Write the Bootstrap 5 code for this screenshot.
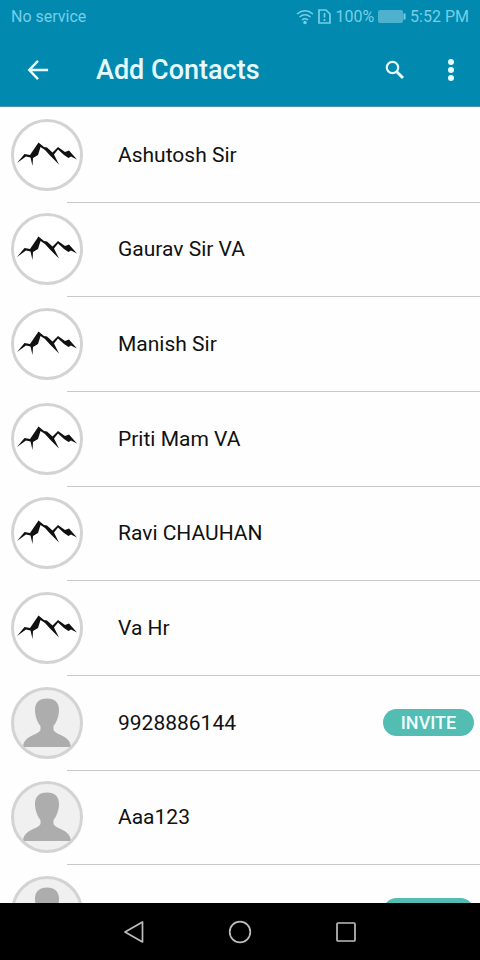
<!DOCTYPE html>
<html lang="en">
<head>
<meta charset="utf-8">
<meta name="viewport" content="width=device-width, initial-scale=1">
<title>Add Contacts</title>
<link href="https://cdn.jsdelivr.net/npm/bootstrap@5.3.0/dist/css/bootstrap.min.css" rel="stylesheet">
<style>
body { font-family: Roboto, "Liberation Sans", sans-serif; background: #fefefe; }
.top-area { background: #0289af; border-bottom: 1px solid #4b93a6; }
.status-line { height: 33px; padding: 0 11px; font-size: 16px; line-height: 33px; color: #76cfe6; }
.app-bar { height: 73px; padding: 0 15px 0 24px; color: #e6fbff; }
.app-bar h1 { font-size: 27px; line-height: 32px; margin-left: 44px; }
.bar-btn { width: 28px; height: 40px; color: #e6fbff; }
.contact-row { height: 95px; padding-left: 11px; }
.contact-row:nth-child(3n+2) { height: 94px; }
.contact-row::after { content: ""; position: absolute; left: 67px; right: 0; bottom: -1px; height: 1px; background: #c9c9c9; }
.avatar { width: 72px; height: 72px; border: 3px solid #d3d3d3; background: #fff; }
.avatar.blank { background: #f0f0f0; }
.contact-name { margin-left: 35px; font-size: 21px; line-height: 28px; color: #111; }
.invite { width: 91px; height: 27px; margin-right: 6px; background: #53bdb3; color: #effffc; font-size: 18px; line-height: 27px; }
.nav-keys { height: 57px; background: #000; }
.nav-keys button { width: 28px; margin: 0 39px; }
</style>
<script src="https://cdn.jsdelivr.net/npm/bootstrap@5.3.0/dist/js/bootstrap.bundle.min.js"></script>
</head>
<body>
<svg class="d-none" aria-hidden="true">
  <symbol id="peaks" viewBox="0 0 66 66">
    <path d="M3 41 10.500 32 16 33 24.500 20.500 30 25 33 25.500 38.500 30.500 44 25 51 30 55 28.500 63 37.500 57 34.500 54.500 36 50 33 44 27.500 40 32.500 45 42.500 36 33.500 31 28 26.500 25 24 33 19 36 18.500 44 16.500 35.500 12 34.500Z" fill="#111"/>
  </symbol>
  <symbol id="person" viewBox="0 0 66 66">
    <path d="M33 8.500C41 8.500 45.500 13 45 21 44.500 28 42 33 39.500 36V40C43 46 56 45 57 57H9C10 45 23 46 26.500 40V36C24 33 21.500 28 21 21 20.500 13 25 8.500 33 8.500Z" fill="#adadad"/>
  </symbol>
</svg>
<div class="d-flex flex-column vh-100 overflow-hidden">
  <header class="top-area flex-shrink-0">
    <div class="status-line d-flex justify-content-between">
      <span>No service</span>
      <div class="d-flex align-items-center">
        <svg width="18" height="16" viewBox="0 0 18 16" fill="none" stroke="currentColor" stroke-width="1.600"><path d="M1 5Q9-1.500 17 5M3.500 8Q9 3.500 14.500 8M6 11Q9 8.500 12 11"/><circle cx="9" cy="13.500" r="1" fill="currentColor"/></svg>
        <svg class="ms-1" width="13" height="15" viewBox="0 0 13 15" fill="none" stroke="currentColor" stroke-width="1.700"><path d="M1 1H8L12 5V14H1ZM6.500 4V8.500M6.500 10V12"/></svg>
        <span class="ms-1">100%</span>
        <svg class="ms-1 me-1" width="28" height="14" viewBox="0 0 28 14"><rect width="25" height="13" rx="2" fill="#4eb1cd"/><path d="M25.500 3.500H27.500V9.500H25.500Z" fill="#76cfe6"/></svg>
        <span>5:52 PM</span>
      </div>
    </div>
    <div class="app-bar d-flex align-items-center">
      <button class="bar-btn btn p-0 border-0 d-flex align-items-center justify-content-center" aria-label="Back"><svg width="22" height="22" viewBox="0 0 24 24" fill="none" stroke="currentColor" stroke-width="2.700"><path d="M12 2 2.500 12 12 22M2.500 12H23"/></svg></button>
      <h1 class="fw-medium mb-0 me-auto">Add Contacts</h1>
      <button class="bar-btn btn p-0 border-0 d-flex align-items-center justify-content-center me-4" aria-label="Search"><svg width="20" height="20" viewBox="0 0 20 20" fill="none" stroke="currentColor"><circle cx="7.500" cy="7.500" r="5.700" stroke-width="2.200"/><path d="m12 12 6 6" stroke-width="3"/></svg></button>
      <button class="bar-btn btn p-0 border-0 d-flex align-items-center justify-content-center ms-1" aria-label="More options"><svg width="8" height="24" viewBox="0 0 8 24" fill="currentColor"><circle cx="4" cy="4" r="3"/><circle cx="4" cy="12" r="3"/><circle cx="4" cy="20" r="3"/></svg></button>
    </div>
  </header>
  <main class="flex-fill overflow-hidden">
    <ul class="list-unstyled mb-0">
      <li class="contact-row position-relative d-flex align-items-center"><svg class="avatar rounded-circle flex-shrink-0"><use href="#peaks"/></svg><span class="contact-name me-auto">Ashutosh Sir</span></li>
      <li class="contact-row position-relative d-flex align-items-center"><svg class="avatar rounded-circle flex-shrink-0"><use href="#peaks"/></svg><span class="contact-name me-auto">Gaurav Sir VA</span></li>
      <li class="contact-row position-relative d-flex align-items-center"><svg class="avatar rounded-circle flex-shrink-0"><use href="#peaks"/></svg><span class="contact-name me-auto">Manish Sir</span></li>
      <li class="contact-row position-relative d-flex align-items-center"><svg class="avatar rounded-circle flex-shrink-0"><use href="#peaks"/></svg><span class="contact-name me-auto">Priti Mam VA</span></li>
      <li class="contact-row position-relative d-flex align-items-center"><svg class="avatar rounded-circle flex-shrink-0"><use href="#peaks"/></svg><span class="contact-name me-auto">Ravi CHAUHAN</span></li>
      <li class="contact-row position-relative d-flex align-items-center"><svg class="avatar rounded-circle flex-shrink-0"><use href="#peaks"/></svg><span class="contact-name me-auto">Va Hr</span></li>
      <li class="contact-row position-relative d-flex align-items-center"><svg class="avatar blank rounded-circle flex-shrink-0"><use href="#person"/></svg><span class="contact-name me-auto">9928886144</span><button class="invite btn rounded-pill border-0 p-0 fw-medium">INVITE</button></li>
      <li class="contact-row position-relative d-flex align-items-center"><svg class="avatar blank rounded-circle flex-shrink-0"><use href="#person"/></svg><span class="contact-name me-auto">Aaa123</span></li>
      <li class="contact-row position-relative d-flex align-items-center"><svg class="avatar blank rounded-circle flex-shrink-0"><use href="#person"/></svg><button class="invite btn rounded-pill border-0 p-0 fw-medium ms-auto" aria-label="Invite"></button></li>
    </ul>
  </main>
  <nav class="nav-keys flex-shrink-0 d-flex align-items-center justify-content-center" aria-label="System">
    <button class="btn border-0 p-0" aria-label="Back"><svg width="24" height="24" viewBox="0 0 24 24" fill="none" stroke="#bdbdbd" stroke-width="1.700" stroke-linejoin="round"><path d="M20.500 2V22L3 12Z"/></svg></button>
    <button class="btn border-0 p-0" aria-label="Home"><svg width="24" height="24" viewBox="0 0 24 24" fill="none" stroke="#bdbdbd" stroke-width="1.700"><circle cx="12" cy="12" r="10.300"/></svg></button>
    <button class="btn border-0 p-0" aria-label="Recent apps"><svg width="24" height="24" viewBox="0 0 24 24" fill="none" stroke="#bdbdbd" stroke-width="1.700"><rect x="3" y="3" width="18" height="18" rx="1"/></svg></button>
  </nav>
</div>
</body>
</html>
